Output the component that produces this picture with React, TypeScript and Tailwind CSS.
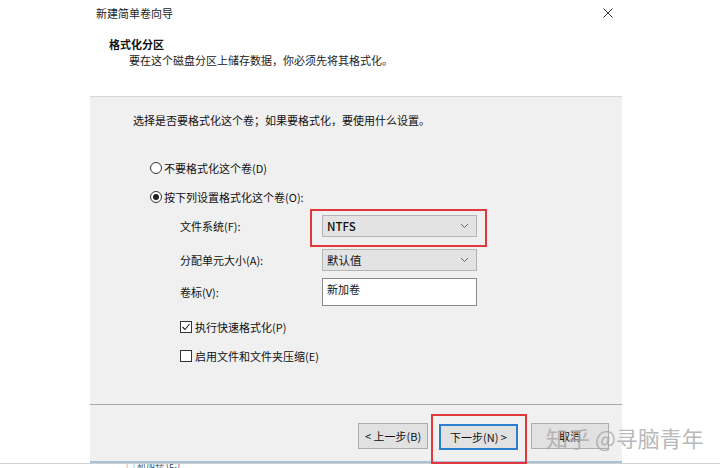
import React from "react";

const font = { fontFamily: '"Noto Sans CJK SC", "Noto Sans", sans-serif' };

function Chevron() {
  return (
    <svg width="9" height="6" viewBox="0 0 9 6" className="shrink-0">
      <path d="M1 1 L4.5 4.5 L8 1" fill="none" stroke="#666" strokeWidth="1" />
    </svg>
  );
}

function Select({ value, bold }: { value: string; bold?: boolean }) {
  return (
    <div className="w-[155px] h-[22px] bg-[#e3e3e3] border border-[#b4b4b4] flex items-center justify-between pl-[4px] pr-[7px]">
      <span className={`text-[11.5px] leading-[16px] text-[#111] ${bold ? "font-medium" : ""}`}>{value}</span>
      <Chevron />
    </div>
  );
}

function Radio({ checked, label }: { checked?: boolean; label: string }) {
  return (
    <div className="flex items-center h-[16px] pl-[60px]">
      <div className="w-[12px] h-[12px] rounded-full border border-[#333] bg-white flex items-center justify-center">
        {checked && <div className="w-[6px] h-[6px] rounded-full bg-[#222]" />}
      </div>
      <span className="ml-[2px] text-[11px] leading-[16px] text-[#111]">{label}</span>
    </div>
  );
}

function Check({ checked, label }: { checked?: boolean; label: string }) {
  return (
    <div className="flex items-center h-[16px] pl-[90px]">
      <div className="w-[12px] h-[12px] border border-[#333] bg-white flex items-center justify-center">
        {checked && (
          <svg width="10" height="10" viewBox="0 0 10 10">
            <path d="M1.5 5 L4 7.5 L8.5 2" fill="none" stroke="#222" strokeWidth="1.1" />
          </svg>
        )}
      </div>
      <span className="ml-[3px] text-[11px] leading-[16px] text-[#111]">{label}</span>
    </div>
  );
}

export default function App() {
  return (
    <div className="w-[720px] h-[468px] bg-white relative overflow-hidden text-black" style={font}>
      {/* header */}
      <div className="h-[96px]">
        <div className="flex items-start justify-between pl-[96px] pr-[107px] pt-[5px]">
          <span className="text-[11px] leading-[16px] text-[#222]">新建简单卷向导</span>
          <svg width="10" height="10" viewBox="0 0 10 10" className="mt-[3px]">
            <path d="M0.5 0.5 L9.5 9.5 M9.5 0.5 L0.5 9.5" stroke="#333" strokeWidth="1" />
          </svg>
        </div>
        <div className="pl-[109px] mt-[15px] text-[11px] leading-[16px] font-bold text-[#111]">格式化分区</div>
        <div className="pl-[129px] text-[11px] leading-[16px] text-[#222]">
          要在这个磁盘分区上储存数据，你必须先将其格式化。
        </div>
      </div>

      {/* panel */}
      <div className="ml-[90px] w-[532px] bg-[#f0f0f0] border-t border-[#d6d6d6] flex flex-col">
        <div className="h-[307px] flex flex-col">
          <div className="pt-[15px] pl-[43px] text-[11px] leading-[16px] text-[#111]">
            选择是否要格式化这个卷；如果要格式化，要使用什么设置。
          </div>
          <div className="mt-[32px]">
            <Radio label="不要格式化这个卷(D)" />
          </div>
          <div className="mt-[13px]">
            <Radio checked label="按下列设置格式化这个卷(O):" />
          </div>

          <div className="mt-[10px] flex items-center pl-[90px]">
            <span className="w-[142px] text-[11px] leading-[16px] text-[#111]">文件系统(F):</span>
            <div className="relative">
              <Select value="NTFS" bold />
              <span className="absolute -left-[12px] -right-[10px] -top-[6px] -bottom-[10px] border-2 border-[#e0383c]" />
            </div>
          </div>
          <div className="mt-[12px] flex items-center pl-[90px]">
            <span className="w-[142px] text-[11px] leading-[16px] text-[#111]">分配单元大小(A):</span>
            <Select value="默认值" />
          </div>
          <div className="mt-[7px] flex items-center pl-[90px]">
            <span className="w-[142px] text-[11px] leading-[16px] text-[#111]">卷标(V):</span>
            <div className="w-[155px] h-[28px] bg-white border border-[#8a8a8a] pl-[4px] pt-[2px] text-[11px] leading-[16px] text-[#111]">
              新加卷
            </div>
          </div>
          <div className="mt-[13px]">
            <Check checked label="执行快速格式化(P)" />
          </div>
          <div className="mt-[13px]">
            <Check label="启用文件和文件夹压缩(E)" />
          </div>
        </div>

        <div className="border-t border-[#a8a8a8] h-[57px] flex justify-end items-start pt-[18px] pr-[13px]">
          <button className="w-[70px] h-[26px] bg-[#e1e1e1] border border-[#adadad] text-[11px] leading-[16px] text-[#111]">
            &lt; 上一步(B)
          </button>
          <div className="relative ml-[11px]">
            <button className="w-[79px] h-[26px] bg-[#e1e1e1] border-2 border-[#2a7fd0] text-[11px] leading-[16px] text-[#111]">
              下一步(N) &gt;
            </button>
            <span className="absolute -left-[8px] -right-[9px] -top-[9px] -bottom-[14px] border-2 border-[#e0383c]" />
          </div>
          <button className="ml-[13px] w-[78px] h-[26px] bg-[#e1e1e1] border border-[#adadad] text-[11px] leading-[16px] text-[#111]">
            取消
          </button>
        </div>
        <div className="h-[2px] bg-[#a9c0d8]" />
      </div>

      {/* bottom strip */}
      <div className="h-[6px] border-t border-[#cfcfcf] overflow-hidden">
        <div className="ml-[126px] text-[9px] leading-[9px] text-[#44506a] -mt-[4px]">□ 新加卷 (E:)</div>
      </div>

      {/* watermark */}
      <div className="absolute left-[546px] top-[423px] text-[22px] leading-[28px] text-[#a8a8a8] opacity-80 whitespace-nowrap">
        知乎 @寻脑青年
      </div>
    </div>
  );
}
